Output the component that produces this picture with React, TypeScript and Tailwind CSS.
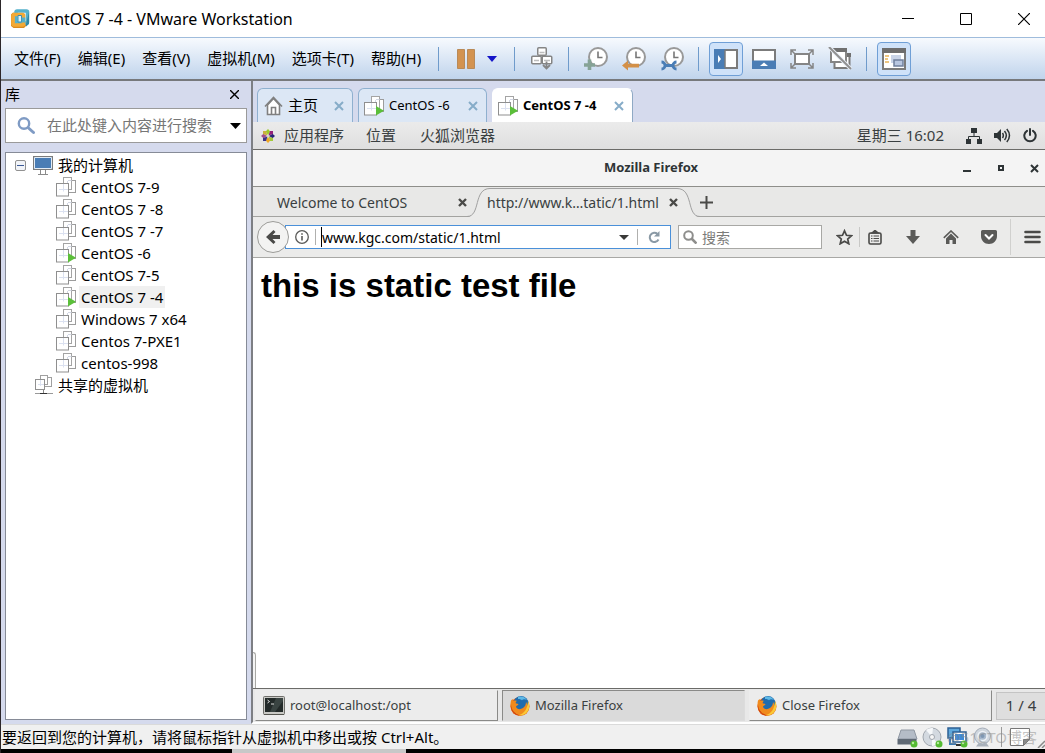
import React from 'react';
import clsx from 'clsx';

type Vm = {
  name: string;
  running?: boolean;
  selected?: boolean;
};

const VMS: Vm[] = [
  { name: 'CentOS 7-9' },
  { name: 'CentOS 7 -8' },
  { name: 'CentOS 7 -7' },
  { name: 'CentOS -6', running: true },
  { name: 'CentOS 7-5' },
  { name: 'CentOS 7 -4', running: true, selected: true },
  { name: 'Windows 7 x64' },
  { name: 'Centos 7-PXE1' },
  { name: 'centos-998' },
];

const MENUS = ['文件(F)', '编辑(E)', '查看(V)', '虚拟机(M)', '选项卡(T)', '帮助(H)'];

/* ---------- Icons ---------- */

const VmwareLogo = () => (
  <svg width="20" height="20" viewBox="0 0 20 20" fill="none" aria-hidden="true">
    <path d="M1 5.500L3.500 3v10L16 14.500v2.500l-2 2H3.500L1 17z" fill="#d98a1f" />
    <rect x="6" y="2" width="11.500" height="12" rx="1" stroke="#56b1cc" strokeWidth="3.600" />
    <path d="M19 3v12l-3 2.500V15z" fill="#2f87a8" />
    <rect x="3" y="5.500" width="10.500" height="10.500" rx="1" stroke="#f3a935" strokeWidth="3.600" />
    <path d="M8 6.500h3.500v6.500H8z" fill="#dff1f7" stroke="#3c8fae" />
    <path d="M13.500 8.500v5" stroke="#56b1cc" strokeWidth="3.600" />
  </svg>
);

const VmIcon = ({ running }: { running?: boolean }) => (
  <svg width="20" height="20" viewBox="0 0 20 20" fill="none" className="shrink-0" aria-hidden="true">
    <rect x="11.500" y="3.500" width="8" height="12" fill="#fff" stroke="#9c9c9c" />
    <rect x="7.500" y="0.5" width="8" height="12" fill="#fff" stroke="#a4a4a4" />
    <path d="M11.500 4v8.500M12 3.500h3.500" stroke="#d3d8e6" />
    <rect x="0.5" y="6.500" width="12" height="12.500" fill="#fff" stroke="#8f8f8f" />
    <path d="M3 12.500h9M7.500 7v7.500" stroke="#dbe1f0" />
    {running && <path d="M12 10v9.500l8-4.700z" fill="#5bbf3a" />}
  </svg>
);

const MonitorIcon = () => (
  <svg width="20" height="19" viewBox="0 0 20 19" fill="none" className="shrink-0" aria-hidden="true">
    <rect x="0.5" y="0.5" width="19" height="13" fill="#4a7db5" stroke="#7b7b7b" />
    <path d="M1.500 12.500v-11h17v11z" stroke="#e3ecf5" />
    <path d="M7.500 14v4M12.500 14v4M5 18.500h10" stroke="#8b8b8b" />
  </svg>
);

const SharedIcon = () => (
  <svg width="18" height="20" viewBox="0 0 18 20" fill="none" className="shrink-0" aria-hidden="true">
    <rect x="8.500" y="2.500" width="8" height="9" fill="#fff" stroke="#a0a0a0" />
    <rect x="5.500" y="0.5" width="7" height="9" fill="#fff" stroke="#a0a0a0" />
    <rect x="0.5" y="4.500" width="9" height="10" fill="#fff" stroke="#909090" />
    <path d="M3 9.500h6M5.500 5v6" stroke="#dbe1f0" />
    <path d="M8.500 15v4" stroke="#888" />
    <path d="M0 18.500h18" stroke="#999" />
    <path d="M5 18.500h7" stroke="#333" />
  </svg>
);

const HomeIcon = () => (
  <svg width="19" height="20" viewBox="0 0 19 20" fill="none" stroke="#808080" strokeWidth="1.600" aria-hidden="true">
    <path d="M3.500 9v9.500h12V9L9.500 2.500z" fill="#fff" />
    <path d="M1 10.500L9.500 1.500l8.500 9" />
    <path d="M7.500 18.500v-7h4v7" />
  </svg>
);

const TabClose = () => (
  <svg width="10" height="10" viewBox="0 0 10 10" stroke="#86acc8" strokeWidth="2" aria-hidden="true">
    <path d="M1 1l8 8M9 1L1 9" />
  </svg>
);

const SmallClose = () => (
  <svg width="9" height="9" viewBox="0 0 9 9" stroke="#4a4a48" strokeWidth="2.400" aria-hidden="true">
    <path d="M1 1l7 7M8 1L1 8" />
  </svg>
);

const SendKeysIcon = () => (
  <svg width="22" height="23" viewBox="0 0 22 23" fill="#fff" stroke="#858585" strokeWidth="1.500" aria-hidden="true">
    <rect x="6.750" y="0.750" width="8.500" height="7.500" rx="1" />
    <rect x="0.750" y="9.250" width="9.500" height="7.500" rx="1" />
    <rect x="11.250" y="9.250" width="9.500" height="7.500" rx="1" />
    <path d="M8.500 5.500h5M3 13.500h5M13 13.500h6" stroke="#bdbdbd" />
    <path d="M15.500 14.500v7M12 18l3.500 3.500L19 18" fill="none" strokeWidth="1.800" />
  </svg>
);

const ClockIcon = ({ kind }: { kind: 'add' | 'back' | 'manage' }) => (
  <svg width="24" height="24" viewBox="0 0 24 24" fill="none" aria-hidden="true">
    <circle cx="14" cy="10" r="9" fill="#fff" stroke="#999" strokeWidth="2" />
    <path d="M14 4.500V10.500h4.500" stroke="#777" strokeWidth="1.600" />
    {kind === 'add' && <path d="M5.500 12.500v10.500M0 18h11" stroke="#86a396" strokeWidth="3.600" />}
    {kind === 'back' && <path d="M0 18.500l6-5v3.200h11v3.800H6V23.500z" fill="#d39048" />}
    {kind === 'manage' && (
      <path d="M1.500 15a3.500 3.500 0 1 1 0 7M5 18.500h8M16.500 15a3.500 3.500 0 1 0 0 7" stroke="#4a7db5" strokeWidth="2.800" />
    )}
  </svg>
);

const SidebarViewIcon = () => (
  <svg width="24" height="20" viewBox="0 0 24 20" fill="none" aria-hidden="true">
    <rect x="1" y="1" width="22" height="18" fill="#fff" stroke="#7b7b7b" strokeWidth="2" />
    <path d="M0 0h11v20H0z" fill="#4a7db5" />
    <path d="M11 1v18" stroke="#7b7b7b" strokeWidth="1.500" />
    <path d="M4 6l3 4-3 4z" fill="#fff" />
  </svg>
);

const ThumbnailViewIcon = () => (
  <svg width="24" height="20" viewBox="0 0 24 20" fill="none" aria-hidden="true">
    <rect x="1" y="1" width="22" height="18" fill="#fff" stroke="#7b7b7b" strokeWidth="2" />
    <path d="M0 11.500h24V20H0z" fill="#4a7db5" />
    <path d="M8 17l4-3.500 4 3.500z" fill="#fff" />
  </svg>
);

const FullscreenIcon = () => (
  <svg width="24" height="20" viewBox="0 0 24 20" fill="none" stroke="#858585" strokeWidth="2" aria-hidden="true">
    <rect x="5" y="5" width="14" height="10" fill="#fff" />
    <path d="M1 6V1h5M1 1l4 4M18 1h5v5M23 1l-4 4M1 14v5h5M1 19l4-4M23 14v5h-5M23 19l-4-4" strokeWidth="1.500" />
  </svg>
);

const UnityIcon = () => (
  <svg width="24" height="23" viewBox="0 0 24 23" fill="none" aria-hidden="true">
    <path d="M6.500 8h15v13h-15z" fill="#fff" stroke="#7b7b7b" strokeWidth="2" />
    <path d="M18 6h5v4h-5z" fill="#707070" />
    <rect x="3" y="2" width="15" height="13" fill="#fff" stroke="#858585" strokeWidth="2" />
    <path d="M2 1h17v4H2z" fill="#707070" />
    <path d="M1 0l22 22" stroke="#e8eef7" strokeWidth="4" />
    <path d="M1 0l22 22" stroke="#909090" strokeWidth="2" />
  </svg>
);

const ConsoleViewIcon = () => (
  <svg width="24" height="22" viewBox="0 0 24 22" fill="none" aria-hidden="true">
    <rect x="1" y="1" width="22" height="20" fill="#fff" stroke="#7b7b7b" strokeWidth="2" />
    <path d="M0 0h24v5H0z" fill="#6d6d6d" />
    <path d="M3 8h4M3 11h3M3 14h4" stroke="#e8b458" strokeWidth="1.400" />
    <path d="M9 7h10v8H9z" fill="#c9d4e8" />
    <rect x="12" y="12" width="9" height="6" fill="#b8c6e0" stroke="#6f7f9c" strokeWidth="1.500" />
  </svg>
);

const CentosIcon = () => (
  <svg width="14" height="14" viewBox="0 0 14 14" aria-hidden="true">
    <path d="M7 0l2.300 2.500L7 6 4.700 2.500z" fill="#9ccd2a" />
    <path d="M7 14l2.300-2.500L7 8l-2.300 3.500z" fill="#efa724" />
    <path d="M0 7l2.500-2.300L6 7 2.500 9.300z" fill="#a14f8c" />
    <path d="M14 7l-2.500-2.300L8 7l3.500 2.300z" fill="#262577" />
    <path d="M2 2h3l1.500 4.500L2 5z" fill="#c9b23b" />
    <path d="M12 2v3L7.500 6.500 9 2z" fill="#932279" />
    <path d="M2 12V9l4.500-1.500L5 12z" fill="#3b3487" />
    <path d="M12 12H9L7.500 7.500 12 9z" fill="#a3c93a" />
  </svg>
);

const NetworkIcon = () => (
  <svg width="16" height="16" viewBox="0 0 16 16" fill="#2e3436" aria-hidden="true">
    <path d="M5 0h6v5H5zM0 11h5v5H0zM11 11h5v5h-5z" />
    <path d="M8 5v3M2.500 11V8.500h11V11" fill="none" stroke="#2e3436" />
  </svg>
);

const VolumeIcon = () => (
  <svg width="17" height="15" viewBox="0 0 17 15" fill="none" stroke="#2e3436" strokeWidth="1.500" aria-hidden="true">
    <path d="M0 5h3l4-4v13l-4-4H0z" fill="#2e3436" stroke="none" />
    <path d="M8.500 5c1 1.500 1 3.500 0 5M10.500 3c2.200 2.700 2.200 6.300 0 9M12.800 1c3.300 4 3.300 9 0 13" />
  </svg>
);

const PowerIcon = () => (
  <svg width="14" height="15" viewBox="0 0 14 15" fill="none" stroke="#2e3436" strokeWidth="2" strokeLinecap="round" aria-hidden="true">
    <path d="M7 1v6M4 2.800a5.700 5.700 0 1 0 6 0" />
  </svg>
);

const FirefoxIcon = () => (
  <svg width="20" height="20" viewBox="0 0 20 20" aria-hidden="true">
    <circle cx="10" cy="10.500" r="9.500" fill="#e25a0c" />
    <circle cx="11" cy="7.500" r="7.500" fill="#1f6cae" />
    <path d="M8 1c3-1.200 7-.2 9 3-2-1-4-1-5 .2-1-.8-2.500-1.500-4-1.200z" fill="#5fb9e6" />
    <path d="M1 4.500L2.500 3l1 2c1-.6 2-.6 3.200-.3L5.500 7c1 .8 2.500.6 3 1.200-.4 1.300-2.200 1.400-2.500 2.500.7 2.500 4 3.300 7 1.300 2-1.500 3-3.500 3-6 2 3 2.500 7 0 10-3 4-9 4-12.500 1C.5 14 0 9 1 4.500z" fill="#f08a1c" />
    <path d="M18 5c2 3.500 2 8.500-1.500 12-2 2-5 2.800-8 2.200 6-1.500 9-6.500 9.500-14.200z" fill="#fbc936" />
    <path d="M1 8c0 6 4 10 9 11.500C4 19.500 0 14 1 8z" fill="#c9350f" />
  </svg>
);

const TerminalIcon = () => (
  <svg width="22" height="20" viewBox="0 0 22 20" aria-hidden="true">
    <rect x="0.5" y="0.5" width="21" height="18" rx="1" fill="#c9c9c5" stroke="#6f6f6b" />
    <rect x="2" y="2" width="18" height="14" fill="#232a29" />
    <path d="M13 2h7v3L12 16H7z" fill="#3a4442" />
    <path d="M4.500 4l2 1.500-2 1.500M8 8h3" fill="none" stroke="#ddd" />
    <path d="M1 18.500h20" stroke="#55554f" />
  </svg>
);

const GreenDot = () => (
  <g>
    <circle cx="17" cy="17" r="3.500" fill="#55bb33" />
    <circle cx="16" cy="16" r="1.200" fill="#b5ec9c" />
  </g>
);

const DeviceIcons = () => (
  <>
    <svg width="21" height="21" viewBox="0 0 21 21" aria-hidden="true">
      <path d="M4 3h13l3 9H1z" fill="#b4bcc7" stroke="#8f97a2" />
      <path d="M.5 12h19v5.500H.5z" fill="#5f6975" />
      <GreenDot />
    </svg>
    <svg width="21" height="21" viewBox="0 0 21 21" aria-hidden="true">
      <circle cx="10" cy="10" r="9" fill="#d3d9e0" stroke="#a0a6ae" />
      <path d="M10 10L4 3a9 9 0 0 1 7-2zM10 10l6 7a9 9 0 0 1-6 2z" fill="#f6f8fa" />
      <circle cx="10" cy="10" r="2.500" fill="#f6f6f6" stroke="#a0a6ae" />
      <GreenDot />
    </svg>
    <svg width="21" height="21" viewBox="0 0 21 21" aria-hidden="true">
      <rect x="1" y="1" width="12" height="10" fill="#5fa8dc" stroke="#2d5f94" strokeWidth="1.500" />
      <path d="M3 12v5h6" fill="none" stroke="#3a78b3" strokeWidth="2" />
      <rect x="6" y="5" width="13" height="10" fill="#fff" stroke="#2d5f94" strokeWidth="1.500" />
      <rect x="8" y="7" width="9" height="6" fill="#3f8ad6" />
      <path d="M9 18h7" stroke="#333" strokeWidth="2" />
      <GreenDot />
    </svg>
    <svg width="21" height="21" viewBox="0 0 21 21" aria-hidden="true">
      <path d="M4 19.500l3-4h7l3 4z" fill="#a9b1bb" />
      <circle cx="10.500" cy="9" r="8" fill="#cfd6de" stroke="#a5adb8" />
      <circle cx="10.500" cy="9" r="4.500" fill="#a9bace" stroke="#eef2f6" strokeWidth="1.500" />
      <circle cx="10.500" cy="9" r="2" fill="#7f98b3" />
    </svg>
  </>
);

/* ---------- Workstation chrome ---------- */

const Separator = () => <div className="ml-[7px] mr-2 h-6 w-px shrink-0 bg-[#6f9bcb]" />;

const ToolButton = ({ label, active, children }: { label: string; active?: boolean; children: React.ReactNode }) => (
  <button type="button" aria-label={label} aria-pressed={active} className="flex w-[38px] shrink-0 items-center justify-center">
    <span
      className={clsx(
        'flex h-[34px] w-[34px] items-center justify-center',
        active && 'rounded-sm border border-[#6f9fd6] bg-[#cfe2f9]',
      )}
    >
      {children}
    </span>
  </button>
);

const TitleBar = () => (
  <header className="flex h-[37px] shrink-0 items-center bg-white pl-[9px]">
    <VmwareLogo />
    <h1 className="ml-[5px] flex-1 text-base">CentOS 7 -4 - VMware Workstation</h1>
    <div className="flex">
      <button type="button" aria-label="最小化" className="flex h-9 w-[58px] items-center justify-center">
        <svg width="12" height="12" viewBox="0 0 12 12" stroke="#000"><path d="M0 5.500h12" /></svg>
      </button>
      <button type="button" aria-label="最大化" className="flex h-9 w-[58px] items-center justify-center">
        <svg width="12" height="12" viewBox="0 0 12 12" fill="none" stroke="#000"><path d="M.5.5h11v11H.5z" /></svg>
      </button>
      <button type="button" aria-label="关闭" className="flex h-9 w-[50px] items-center justify-center pl-2">
        <svg width="12" height="12" viewBox="0 0 12 12" stroke="#000" strokeWidth="1.200"><path d="M0 0l12 12M12 0L0 12" /></svg>
      </button>
    </div>
  </header>
);

const Toolbar = () => (
  <div className="flex h-11 shrink-0 items-center border-b-2 border-t border-b-[#77797c] border-t-[#9fbcdc] bg-linear-to-b from-[#f7fafe] to-[#c0d4ec]">
    <nav className="flex gap-[17px] pl-[13px] pr-[10px] text-[15px]">
      {MENUS.map((menu) => (
        <button key={menu} type="button" className="whitespace-nowrap">
          {menu}
        </button>
      ))}
    </nav>
    <Separator />
    <ToolButton label="挂起">
      <svg width="18" height="20" viewBox="0 0 18 20" fill="#d39350" stroke="#b98a58">
        <path d="M.5.5h7v19h-7zM10.500.5h7v19h-7z" />
      </svg>
    </ToolButton>
    <button type="button" aria-label="电源选项" className="flex h-6 w-[22px] shrink-0 items-center pl-0.5">
      <svg width="10" height="6" viewBox="0 0 10 6"><path d="M0 0h10L5 6z" fill="#1414c8" /></svg>
    </button>
    <Separator />
    <ToolButton label="发送 Ctrl+Alt+Del"><SendKeysIcon /></ToolButton>
    <Separator />
    <ToolButton label="拍摄快照"><ClockIcon kind="add" /></ToolButton>
    <ToolButton label="恢复快照"><ClockIcon kind="back" /></ToolButton>
    <ToolButton label="管理快照"><ClockIcon kind="manage" /></ToolButton>
    <Separator />
    <ToolButton label="显示库" active><SidebarViewIcon /></ToolButton>
    <ToolButton label="缩略图栏"><ThumbnailViewIcon /></ToolButton>
    <ToolButton label="全屏"><FullscreenIcon /></ToolButton>
    <ToolButton label="Unity"><UnityIcon /></ToolButton>
    <Separator />
    <ToolButton label="控制台视图" active><ConsoleViewIcon /></ToolButton>
  </div>
);

const Library = () => (
  <aside className="flex w-[250px] shrink-0 flex-col bg-[#d5daed] px-1 pb-1">
    <div className="flex h-[27px] items-center justify-between pr-1 text-[15px]">
      <h2>库</h2>
      <button type="button" aria-label="关闭库" className="p-1">
        <svg width="9" height="9" viewBox="0 0 9 9" stroke="#000" strokeWidth="1.400"><path d="M0 0l9 9M9 0L0 9" /></svg>
      </button>
    </div>
    <label className="flex h-[35px] items-center border border-[#9a9a9a] bg-white pl-[11px] pr-[5px]">
      <svg width="19" height="19" viewBox="0 0 19 19" fill="none" stroke="#7f9bc4" strokeLinecap="round">
        <circle cx="7" cy="7.500" r="5.200" strokeWidth="2.400" />
        <path d="M11.500 12l5 4.500" strokeWidth="3" />
      </svg>
      <input
        aria-label="搜索库"
        placeholder="在此处键入内容进行搜索"
        className="ml-[11px] min-w-0 flex-1 text-[15px] outline-none placeholder:text-[#767676]"
      />
      <svg width="11" height="6" viewBox="0 0 11 6"><path d="M0 0h11L5.500 6z" /></svg>
    </label>
    <div className="mt-[9px] flex-1 border border-[#868b97] bg-white py-px text-[15px] leading-[22px]">
      <div className="flex h-[22px] items-center pl-[9px]">
        <button type="button" aria-label="折叠" className="flex h-[11px] w-[11px] items-center justify-center rounded-xs border border-[#919191] bg-[#f2f4f8]">
          <span className="h-px w-[7px] bg-[#3c5a96]" />
        </button>
        <span className="ml-[7px] flex"><MonitorIcon /></span>
        <span className="ml-[5px]">我的计算机</span>
      </div>
      <ul>
        {VMS.map((vm) => (
          <li key={vm.name} className="flex h-[22px] items-center pl-[50px]">
            <VmIcon running={vm.running} />
            <button type="button" className={clsx('ml-[3px] px-0.5', vm.selected && 'bg-[#f0f0f0]')}>
              {vm.name}
            </button>
          </li>
        ))}
      </ul>
      <div className="flex h-[22px] items-center pl-[29px]">
        <SharedIcon />
        <span className="ml-[5px]">共享的虚拟机</span>
      </div>
    </div>
  </aside>
);

const MachineTab = ({ label, active, wide, icon }: { label: string; active?: boolean; wide?: string; icon: React.ReactNode }) => (
  <div
    className={clsx(
      'flex h-[34px] items-center rounded-t-md border border-b-0 pl-[5px] pr-2 text-[13px]',
      active ? 'border-white border-r-[#8fa9c4] bg-white font-bold' : 'border-[#8fb0cf] bg-[#dce7f5]',
      wide,
    )}
  >
    {icon}
    <button type="button" className="ml-[5px] flex-1 whitespace-nowrap text-left">{label}</button>
    <button type="button" aria-label={`关闭 ${label}`}><TabClose /></button>
  </div>
);

const MachineTabs = () => (
  <div className="flex h-[41px] shrink-0 items-end gap-[5px] bg-[#d5daed] pl-1">
    <div className="flex h-[34px] w-24 items-center rounded-t-md border border-b-0 border-[#8fb0cf] bg-[#dce7f5] pl-[6px] pr-2 text-[15px]">
      <HomeIcon />
      <button type="button" className="ml-[5px] flex-1 text-left">主页</button>
      <button type="button" aria-label="关闭 主页"><TabClose /></button>
    </div>
    <MachineTab label="CentOS -6" wide="w-[129px]" icon={<VmIcon running />} />
    <MachineTab label="CentOS 7 -4" wide="w-[141px]" active icon={<VmIcon running />} />
  </div>
);

/* ---------- Guest desktop ---------- */

const GnomeTopBar = () => (
  <div className="flex h-7 shrink-0 items-center border-b border-[#6b6b68] bg-linear-to-b from-[#ebebeb] to-[#dfdfdf] pl-2 pr-2 text-[15px] text-[#3a3f41]">
    <CentosIcon />
    <button type="button" className="ml-[9px]">应用程序</button>
    <button type="button" className="ml-[22px]">位置</button>
    <button type="button" className="ml-6">火狐浏览器</button>
    <span className="ml-auto">星期三 16:02</span>
    <div className="ml-[22px] flex items-center gap-3">
      <NetworkIcon />
      <VolumeIcon />
      <PowerIcon />
    </div>
  </div>
);

const FirefoxTabs = () => (
  <div className="flex h-[30px] shrink-0 items-stretch bg-[#e8e8e7] text-[14px] text-[#3a3f41] shadow-[inset_0_-1px_0_#a3a3a0]">
    <div className="flex w-[214px] items-center pl-6">
      <button type="button" className="flex-1 text-left">Welcome to CentOS</button>
      <button type="button" aria-label="关闭标签页"><SmallClose /></button>
    </div>
    <div className="relative flex w-[233px] items-center pl-5 pr-[22px]">
      <svg className="absolute inset-0" width="233" height="30" viewBox="0 0 233 30" fill="#ebebea" aria-hidden="true">
        <path d="M0 30C14 30 6 1.500 23 1.500h187C227 1.500 219 30 233 30z" />
        <path d="M0 29.500C14 29.500 6 1.500 23 1.500h187C227 1.500 219 29.500 233 29.500" fill="none" stroke="#a0a0a0" />
      </svg>
      <button type="button" className="relative flex-1 whitespace-nowrap text-left">http://www.k…tatic/1.html</button>
      <button type="button" aria-label="关闭标签页" className="relative"><SmallClose /></button>
    </div>
    <button type="button" aria-label="新建标签页">
      <svg width="13" height="13" viewBox="0 0 13 13" stroke="#4a4a48" strokeWidth="2"><path d="M6.500 0v13M0 6.500h13" /></svg>
    </button>
  </div>
);

const NavButton = ({ label, children }: { label: string; children: React.ReactNode }) => (
  <button type="button" aria-label={label} className="flex h-8 w-[38px] items-center justify-center">
    {children}
  </button>
);

const FirefoxNav = () => (
  <div className="flex h-[41px] shrink-0 items-center border-b border-[#a8a8a5] bg-[#ebebea] pl-1 text-[14px] text-black">
    <button type="button" aria-label="后退" className="z-10 flex h-8 w-8 shrink-0 items-center justify-center rounded-full border border-[#9c9c99] bg-[#f3f3f2]">
      <svg width="15" height="14" viewBox="0 0 15 14" fill="#4a4a48"><path d="M7.500 0L0 7l7.500 7 2-2-3-3H14V5H6.500l3-3z" /></svg>
    </button>
    <div className="-ml-1 flex h-6 min-w-0 flex-1 items-center border border-[#4a90d9] bg-white pl-[9px] pr-2.5">
      <svg width="14" height="14" viewBox="0 0 14 14" fill="none" stroke="#5a5a58">
        <circle cx="7" cy="7" r="6.300" strokeWidth="1.300" />
        <path d="M7 6v4.500M7 3.300v1.500" strokeWidth="1.600" />
      </svg>
      <div className="ml-1.5 h-4 w-px bg-[#b0b0ae]" />
      <div className="ml-[5px] h-5 w-px bg-black" />
      <input aria-label="网址" defaultValue="www.kgc.com/static/1.html" className="min-w-0 flex-1 outline-none" />
      <button type="button" aria-label="历史记录">
        <svg width="10" height="5" viewBox="0 0 10 5"><path d="M0 0h10L5 5z" fill="#3a3a38" /></svg>
      </button>
      <div className="ml-2 h-4 w-px bg-[#b0b0ae]" />
      <button type="button" aria-label="刷新" className="ml-2.5">
        <svg width="12" height="12" viewBox="0 0 12 12" fill="none" stroke="#8a99a5" strokeWidth="2">
          <path d="M9.500 3A4.600 4.600 0 1 0 10.500 8.500" />
          <path d="M11.500 0v5.500H6z" fill="#8a99a5" stroke="none" />
        </svg>
      </button>
    </div>
    <label className="ml-[7px] flex h-6 w-36 shrink-0 items-center border border-[#a8a8a5] bg-white pl-1">
      <svg width="14" height="14" viewBox="0 0 14 14" fill="none" stroke="#8e8e8c">
        <circle cx="5.500" cy="5.500" r="4.300" strokeWidth="2" />
        <path d="M8.500 8.500l5 5" strokeWidth="2.600" />
      </svg>
      <input aria-label="搜索" placeholder="搜索" className="ml-[5px] w-24 outline-none placeholder:text-[#7c7c7a]" />
    </label>
    <div className="flex shrink-0 items-center">
      <button type="button" aria-label="加入书签" className="ml-3.5 flex w-[17px] justify-center">
        <svg width="17" height="16" viewBox="0 0 17 16" fill="none" stroke="#4a4a48" strokeWidth="1.700">
          <path d="M8.500 1.800l2 4.500 4.900.5-3.700 3.200 1.100 4.800-4.300-2.500-4.300 2.500 1.100-4.800L1.600 6.800l4.900-.5z" />
        </svg>
      </button>
      <div className="ml-[6px] h-5 w-px bg-[#c8c8c6]" />
      <button type="button" aria-label="显示书签" className="flex h-8 w-[34px] items-center pl-2">
        <svg width="14" height="15" viewBox="0 0 14 15" fill="none" stroke="#4a4a48" strokeWidth="1.600">
          <rect x="1" y="3" width="12" height="11" rx="1.500" />
          <path d="M4 3L7 .5 10 3z" fill="#4a4a48" />
          <path d="M3 6h1.500M5.500 6H11M3 8.500h1.500M5.500 8.500H11M3 11h1.500M5.500 11H11" strokeWidth="1.200" />
        </svg>
      </button>
      <NavButton label="下载">
        <svg width="14" height="14" viewBox="0 0 14 14" fill="#5a5a58"><path d="M4.500 0h5v6H14l-7 8-7-8h4.500z" /></svg>
      </NavButton>
      <NavButton label="主页">
        <svg width="16" height="14" viewBox="0 0 16 14" fill="#5a5a58">
          <path d="M8 3.500L13 8.500V14H9.500v-4h-3v4H3V8.500z" />
          <path d="M.8 7.800L8 1l7.200 6.800" fill="none" stroke="#5a5a58" strokeWidth="1.600" />
        </svg>
      </NavButton>
      <NavButton label="Pocket">
        <svg width="16" height="14" viewBox="0 0 16 14" fill="#5a5a58">
          <path d="M1.500 0h13A1.500 1.500 0 0 1 16 1.500V6c0 4.500-3.500 8-8 8S0 10.500 0 6V1.500A1.500 1.500 0 0 1 1.500 0z" />
          <path d="M4.500 5L8 8.500 11.500 5" fill="none" stroke="#fff" strokeWidth="2" strokeLinecap="round" />
        </svg>
      </NavButton>
      <div className="ml-0.5 h-9 w-px bg-[#d0d0ce]" />
      <button type="button" aria-label="打开菜单" className="ml-[13px] mr-1">
        <svg width="17" height="14" viewBox="0 0 17 14" stroke="#4a4a48" strokeWidth="2.600" strokeLinecap="round">
          <path d="M1.500 2h14M1.500 7h14M1.500 12h14" />
        </svg>
      </button>
    </div>
  </div>
);

const TaskButton = ({ label, active, icon }: { label: string; active?: boolean; icon: React.ReactNode }) => (
  <button
    type="button"
    className={clsx(
      'flex h-[31px] min-w-0 flex-1 items-center gap-[5px] border pl-[7px] text-left text-[13px] text-[#3a3f41]',
      active ? 'border-[#dcdcdc] border-l-[#8a8a88] border-t-[#8a8a88] bg-[#dadada]' : 'border-[#ececec] border-b-[#8a8a88] border-r-[#8a8a88] bg-[#ececec]',
    )}
  >
    {icon}
    <span>{label}</span>
  </button>
);

const Guest = () => (
  <main className="flex min-w-0 flex-1 flex-col">
    <GnomeTopBar />
    <div className="flex h-[37px] shrink-0 items-center border-b border-[#8e8e8a] bg-[#f4f4f4] text-[#2e3436]">
      <h2 className="flex-1 pl-[119px] text-center text-[13px] font-bold">Mozilla Firefox</h2>
      <div className="flex w-[115px] items-center justify-between pl-[33px] pr-[6px]">
        <button type="button" aria-label="最小化"><svg width="8" height="8" viewBox="0 0 8 8"><path d="M0 6h8v2H0z" fill="#2e3436" /></svg></button>
        <button type="button" aria-label="最大化"><svg width="6" height="6" viewBox="0 0 6 6" fill="none"><path d="M1 1h4v4H1z" stroke="#2e3436" strokeWidth="2" /></svg></button>
        <button type="button" aria-label="关闭窗口"><svg width="9" height="9" viewBox="0 0 9 9" stroke="#2e3436" strokeWidth="2"><path d="M1 1l7 7M8 1L1 8" /></svg></button>
      </div>
    </div>
    <FirefoxTabs />
    <FirefoxNav />
    <article className="relative flex-1 bg-white px-2 pt-2 text-black">
      <p className="font-['Liberation_Sans','Noto_Sans_CJK_SC',sans-serif] text-[33px] font-bold leading-10">this is static test file</p>
      <div className="absolute bottom-0 left-0 h-9 w-[3px] rounded-tr-sm border-r border-t border-[#a8a8a5] bg-[#f4f4f4]" />
    </article>
    <footer className="flex h-[34px] shrink-0 items-center gap-1 border-t border-[#6b6b68] bg-[#e8e8e8] pl-0.5">
      <TaskButton label="root@localhost:/opt" icon={<TerminalIcon />} />
      <TaskButton label="Mozilla Firefox" active icon={<FirefoxIcon />} />
      <TaskButton label="Close Firefox" icon={<FirefoxIcon />} />
      <div className="flex h-7 w-[49px] items-center justify-center border border-r-0 border-[#c4c4c4] bg-[#dedede] text-[15px] text-[#3a3f41]">
        1 / 4
      </div>
    </footer>
  </main>
);

const StatusBar = () => (
  <div className="relative flex h-[25px] shrink-0 items-center border-t border-[#dadada] bg-[#f0f0f0] pl-px text-[15px]">
    <p className="flex-1 whitespace-nowrap">要返回到您的计算机，请将鼠标指针从虚拟机中移出或按 Ctrl+Alt。</p>
    <div className="flex items-center gap-1">
      <DeviceIcons />
      <div className="ml-1 h-5 w-px bg-[#9a9a9a]" />
      <svg width="20" height="19" viewBox="0 0 20 19" fill="#fff" stroke="#777" className="ml-1" aria-hidden="true">
        <path d="M.5.5h19v11l-6 6H.5z" />
        <path d="M19.500 11.500h-6v6z" fill="#8a8a8a" />
      </svg>
      <svg width="11" height="11" viewBox="0 0 11 11" stroke="#8a8a8a" className="mt-2.5" aria-hidden="true">
        <path d="M4 11l7-7M8 11l3-3" strokeWidth="1.500" />
      </svg>
    </div>
    <span className="pointer-events-none absolute right-2 top-0 text-[15px] leading-6 text-[#8a8a8a]/50">@51CTO博客</span>
  </div>
);

const App: React.FC = () => {
  return (
    <div className="flex min-h-screen flex-col border-l border-[#2b2629] bg-[#f0f0f0] font-['Noto_Sans','Noto_Sans_CJK_SC',sans-serif] text-black">
      <TitleBar />
      <Toolbar />
      <div className="flex flex-1">
        <Library />
        <div className="flex min-w-0 flex-1 flex-col border-b-2 border-l-2 border-b-white border-l-[#7d7f84]">
          <MachineTabs />
          <Guest />
        </div>
      </div>
      <StatusBar />
      {/* Sliver of the windows behind */}
      <div className="flex h-1 shrink-0 bg-black">
        <div className="ml-[231px] h-full w-[174px] bg-[#c8c8c8]" />
      </div>
    </div>
  );
};

export default App;
